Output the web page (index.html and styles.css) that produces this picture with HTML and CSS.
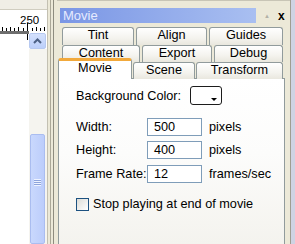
FILE: index.html
```html
<!DOCTYPE html>
<html lang="en">
<head>
    <meta charset="UTF-8">
    <title>Movie</title>
    <link rel="stylesheet" href="styles.css">
</head>
<body>
<div class="app">

    <!-- stage with ruler and scrollbar -->
    <div class="stage">
        <div class="stage-top"></div>
        <div class="ruler">
            <svg width="47" height="21" viewBox="0 0 47 21">
                <text x="20" y="14" class="ruler-num">250</text>
                <g stroke="#000" stroke-width="1">
                    <line x1="2.5" y1="17" x2="2.5" y2="21"/>
                    <line x1="6.5" y1="18" x2="6.5" y2="21"/>
                    <line x1="10.5" y1="17" x2="10.5" y2="21"/>
                    <line x1="14.5" y1="18" x2="14.5" y2="21"/>
                    <line x1="18.5" y1="17" x2="18.5" y2="21"/>
                    <line x1="23.5" y1="18" x2="23.5" y2="21"/>
                    <line x1="27.5" y1="13" x2="27.5" y2="21"/>
                    <line x1="32.5" y1="18" x2="32.5" y2="21"/>
                    <line x1="36.5" y1="17" x2="36.5" y2="21"/>
                    <line x1="40.5" y1="18" x2="40.5" y2="21"/>
                    <line x1="44.5" y1="17" x2="44.5" y2="21"/>
                </g>
            </svg>
        </div>
        <div class="stage-body">
            <div class="canvas"><span class="marker"></span></div>
            <div class="vscroll">
                <div class="scroll-btn">
                    <svg width="9" height="6" viewBox="0 0 9 6"><path d="M1 5 L4.5 1.5 L8 5" fill="none" stroke="#4d6185" stroke-width="2"/></svg>
                </div>
                <div class="scroll-track">
                    <div class="thumb"><span class="grip"></span></div>
                </div>
            </div>
        </div>
    </div>

    <div class="splitter"><div class="splitter-line"></div></div>

    <!-- Movie panel -->
    <div class="panel">
        <div class="panel-head">
            <div class="title-bar">Movie</div>
            <span class="btn-collapse">&#9650;</span>
            <span class="btn-close">x</span>
        </div>

        <div class="tabs">
            <div class="tab-row row-1">
                <div class="tab">Tint</div>
                <div class="tab">Align</div>
                <div class="tab">Guides</div>
            </div>
            <div class="tab-row row-2">
                <div class="tab">Content</div>
                <div class="tab">Export</div>
                <div class="tab">Debug</div>
            </div>
            <div class="tab-row row-3">
                <div class="tab active">Movie</div>
                <div class="tab">Scene</div>
                <div class="tab">Transform</div>
            </div>
        </div>

        <div class="tab-page">
            <div class="field bg-row">
                <span class="label">Background Color:</span>
                <span class="swatch"><span class="swatch-arrow"></span></span>
            </div>
            <div class="field">
                <span class="label">Width:</span>
                <span class="input">500</span>
                <span class="unit">pixels</span>
            </div>
            <div class="field">
                <span class="label">Height:</span>
                <span class="input">400</span>
                <span class="unit">pixels</span>
            </div>
            <div class="field field-rate">
                <span class="label">Frame Rate:</span>
                <span class="input">12</span>
                <span class="unit">frames/sec</span>
            </div>
            <label class="check-row">
                <span class="checkbox"></span>
                <span>Stop playing at end of movie</span>
            </label>
        </div>
    </div>

    <div class="edge"></div>
</div>
</body>
</html>
```

FILE: styles.css
```css
* {
    box-sizing: border-box;
}

body {
    margin: 0;
    width: 295px;
    height: 244px;
    overflow: hidden;
    background: #ece9d8;
    font-family: "Liberation Sans", Arial, sans-serif;
    font-size: 12.7px;
    color: #000;
}

.app {
    display: flex;
    height: 244px;
}

/* stage */
.stage {
    width: 48px;
    display: flex;
    flex-direction: column;
    border-right: 1px solid #c3c0b2;
}

.stage-top {
    height: 27px;
    background: #f0eee6;
    border-bottom: 1px solid #d0cdc0;
}

.ruler {
    height: 21px;
    background: #fff;
}

.ruler svg {
    display: block;
}

.ruler-num {
    font-family: "Liberation Sans", Arial, sans-serif;
    font-size: 11.5px;
}

.stage-body {
    flex: 1;
    display: flex;
}

.canvas {
    width: 29px;
    background: #fff;
    border-top: 3px solid #6e6e6e;
    position: relative;
}

/* dashed marker under the ruler */
.marker {
    position: absolute;
    left: 27px;
    top: 0;
    height: 6px;
    border-left: 1px dashed #000;
}

.vscroll {
    width: 18px;
    display: flex;
    flex-direction: column;
    background: #fff;
    padding-top: 2px;
}

.scroll-btn {
    height: 16px;
    margin: 0 1px 0 0;
    border: 1px solid #b7c9f0;
    border-radius: 2px;
    background: linear-gradient(#d4e1fd, #bccffa);
    display: flex;
    align-items: center;
    justify-content: center;
}

.scroll-track {
    flex: 1;
    background: #f5f4ef;
    padding: 85px 2px 0 1px;
}

.thumb {
    height: 110px;
    border: 1px solid #aabdf0;
    border-radius: 2px;
    background: linear-gradient(to right, #c9d8fd, #bccdfb);
    display: flex;
    justify-content: center;
    padding-top: 44px;
}

.grip {
    width: 7px;
    height: 7px;
    background: repeating-linear-gradient(#eef3ff 0 1px, #8da4dc 1px 2px);
}

/* splitter */
.splitter {
    width: 9px;
    padding-left: 2px;
}

.splitter-line {
    width: 4px;
    height: 100%;
    border-left: 1px solid #aba898;
    border-right: 1px solid #8e8c7f;
}

/* panel */
.panel {
    flex: 1;
    display: flex;
    flex-direction: column;
    border-top: 1px solid #c8c5b6;
}

.panel-head {
    display: flex;
    align-items: center;
    padding: 7px 0 0 3px;
    height: 22px;
}

.title-bar {
    width: 196px;
    height: 15px;
    line-height: 15px;
    padding-left: 3px;
    font-size: 13px;
    color: #e6ebff;
    background: linear-gradient(to right, #7a96e5, #a9bff1);
}

.btn-collapse {
    font-size: 6px;
    color: #b3b1a6;
    margin-left: 8px;
}

.btn-close {
    font-size: 12px;
    font-weight: bold;
    margin-left: 8px;
    line-height: 10px;
}

/* tabs */
.tabs {
    padding-top: 4px;
}

.tab-row {
    display: grid;
    align-items: end;
}

.row-1 {
    height: 18px;
    margin-left: 5px;
    grid-template-columns: 72px 71px 74px;
    column-gap: 2px;
}

.row-2 {
    height: 17px;
    margin-left: 5px;
    grid-template-columns: 78px 70px 69px;
    column-gap: 2px;
}

.row-3 {
    height: 21px;
    margin-top: -4px;
    margin-left: 1px;
    grid-template-columns: 74px 62px 87px;
    column-gap: 1px;
    position: relative;
    z-index: 1;
    margin-bottom: -1px;
}

.tab {
    height: 100%;
    border: 1px solid #919b9c;
    border-bottom: none;
    border-radius: 3px 3px 0 0;
    background: linear-gradient(#fff, #f4f3ee 60%, #e9e7de);
    text-align: center;
    line-height: 15px;
}

.row-3 .tab {
    height: 17px;
}

.row-3 .tab.active {
    height: 21px;
    background: #fff;
    border-top: 3px solid #f2a93b;
    border-color: #919b9c;
    border-top-color: #f2a93b;
    line-height: 14px;
}

/* tab page */
.tab-page {
    flex: 1;
    width: 227px;
    margin-left: 1px;
    border: 1px solid #919b9c;
    border-bottom: none;
    background: linear-gradient(#fff, #fcfcfb 45%, #f4f3ee);
    padding: 7px 0 0 17px;
}

.field {
    display: flex;
    align-items: center;
    height: 18px;
    margin-bottom: 5px;
}

.bg-row {
    height: 19px;
    margin-bottom: 13px;
}

.field-rate {
    margin-top: 6px;
}

.label {
    width: 71px;
}

.bg-row .label {
    width: 114px;
}

.swatch {
    width: 32px;
    height: 19px;
    border: 1px solid #1c1c1c;
    border-radius: 3px;
    background: #fff;
    position: relative;
}

.swatch-arrow {
    position: absolute;
    right: 4px;
    bottom: 3px;
    border-left: 3px solid transparent;
    border-right: 3px solid transparent;
    border-top: 3px solid #000;
}

.input {
    width: 55px;
    height: 18px;
    border: 1px solid #7f9db9;
    background: #fff;
    padding-left: 6px;
    line-height: 16px;
}

.unit {
    margin-left: 7px;
}

.check-row {
    display: flex;
    align-items: center;
    margin-top: 14px;
}

.checkbox {
    width: 13px;
    height: 13px;
    border: 1px solid #1c5180;
    background: linear-gradient(135deg, #dcdcd7, #fff);
    margin-right: 4px;
}

/* right window edge */
.edge {
    width: 5px;
    border-left: 1px solid #9f9d91;
    background: #cfd3e3;
}
```
